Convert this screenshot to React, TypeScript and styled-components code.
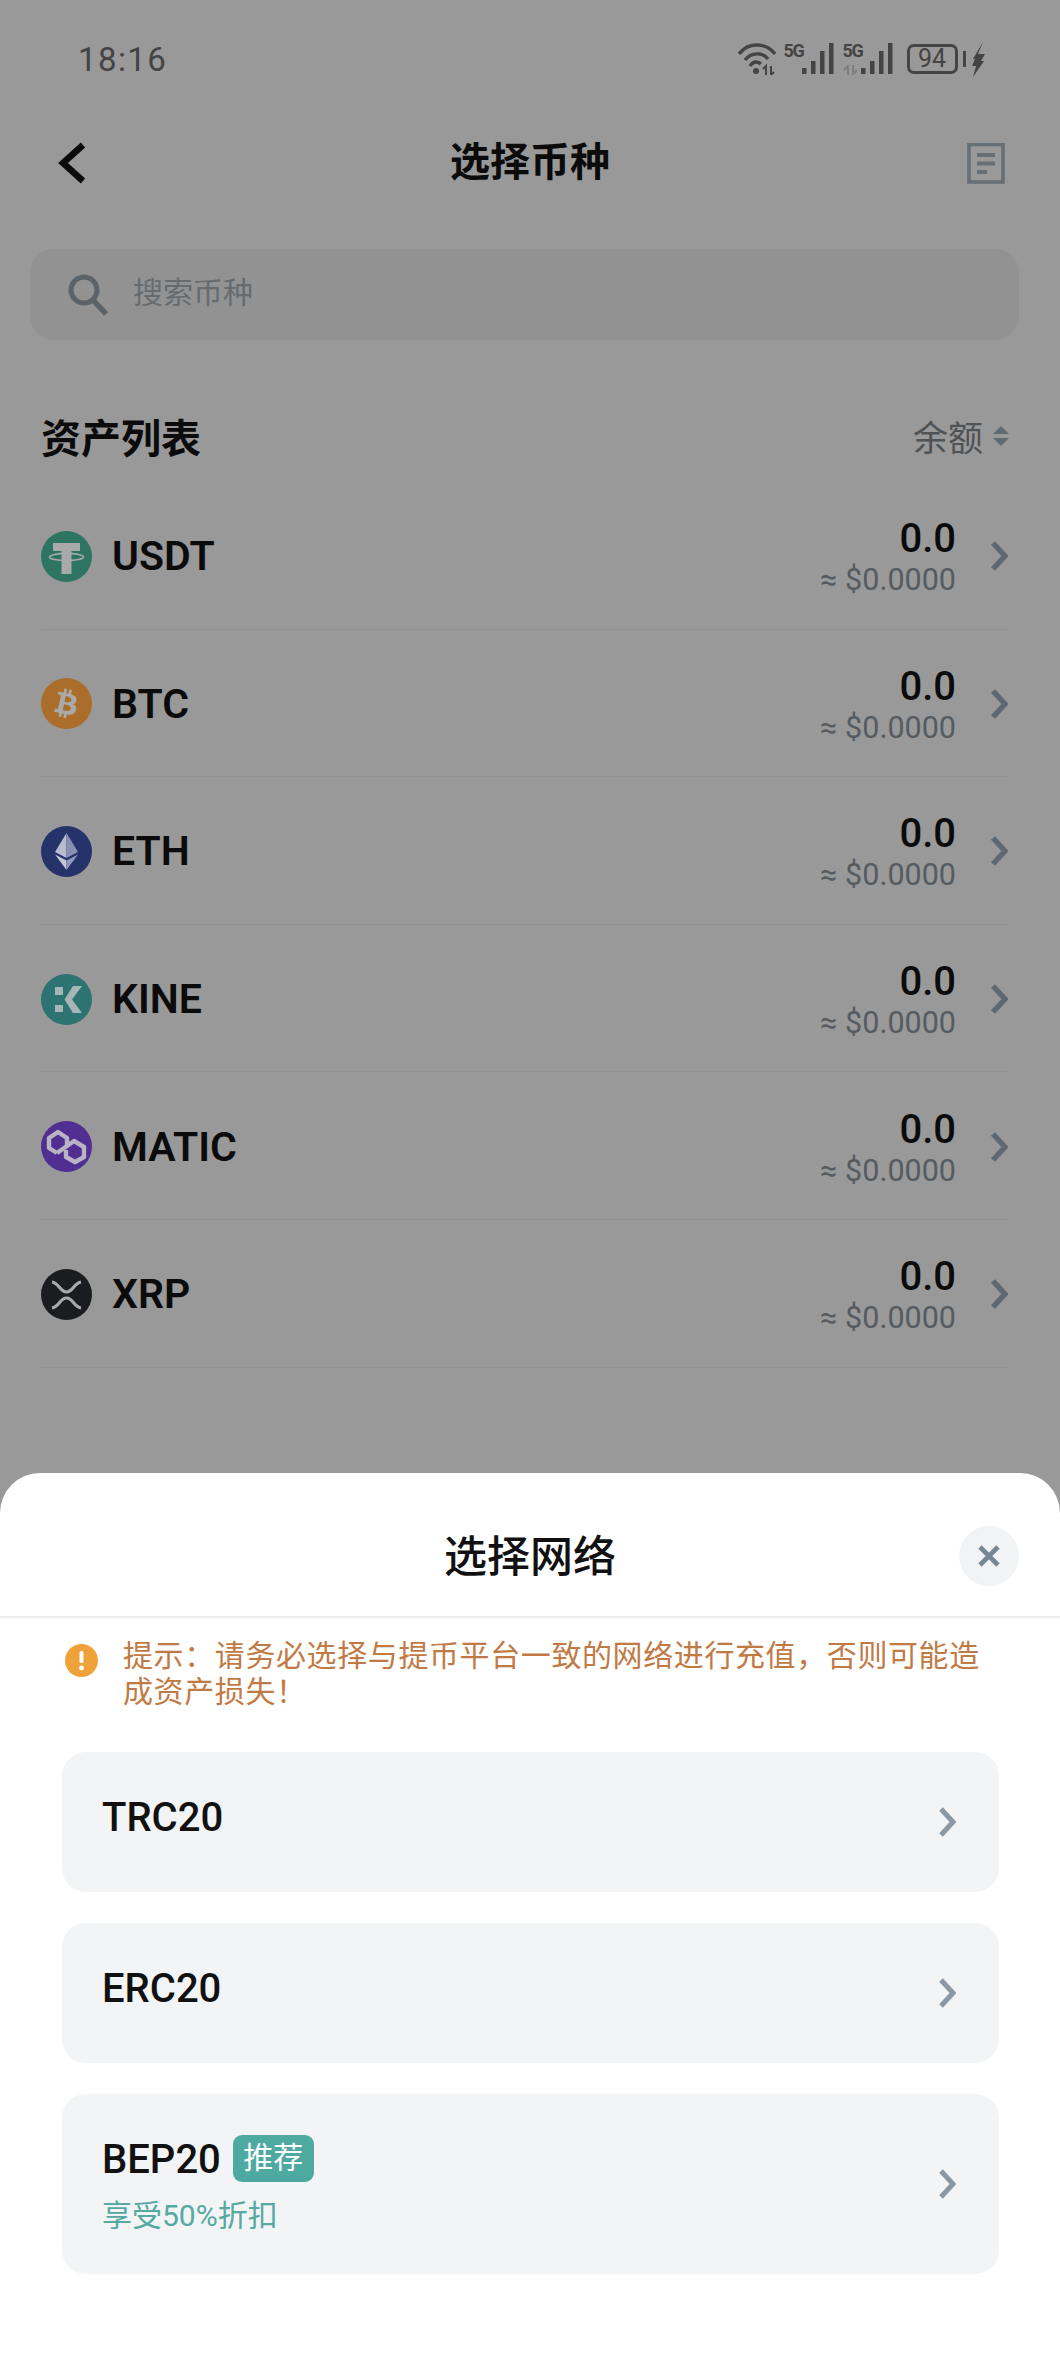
import React from "react";
import styled, { createGlobalStyle } from "styled-components";
import { FaBtc } from "react-icons/fa";

const Global = createGlobalStyle`
  html, body { margin: 0; padding: 0; background: #999; }
  * { box-sizing: border-box; }
  body { font-family: Roboto, "Noto Sans CJK SC", sans-serif; }
`;

const Screen = styled.div`
  position: relative;
  width: 1060px;
  height: 2376px;
  overflow: hidden;
  background: #999999;
  color: #0b0b0b;
`;

const StatusBar = styled.div`
  height: 118px;
  padding: 0 75px 0 78px;
  display: flex;
  align-items: center;
  justify-content: space-between;
`;
const Time = styled.div`
  font-size: 33px;
  letter-spacing: 1.4px;
  color: #444;
`;
const StatusIcons = styled.div`
  display: flex;
  align-items: center;
  color: #404040;
`;
const SignalGroup = styled.div`
  display: flex;
  align-items: flex-end;
  height: 32px;
  margin-left: 8px;
`;
const FiveGStack = styled.div`
  width: 18px;
  height: 32px;
  display: flex;
  flex-direction: column;
  justify-content: space-between;
`;
const FiveG = styled.span`
  font-size: 18px;
  line-height: 15px;
  font-weight: 700;
  letter-spacing: -1.3px;
  color: #444;
`;
const Battery = styled.div`
  width: 51px;
  height: 30px;
  margin-left: 13px;
  border: 3px solid #444;
  border-radius: 7px;
  font-size: 25px;
  line-height: 24px;
  text-align: center;
  color: #444;
`;
const BatteryNib = styled.div`
  width: 3.5px;
  height: 16px;
  margin: 0 6px 0 5px;
  background: #444;
`;

const Header = styled.div`
  height: 90px;
  padding: 0 55px;
  display: grid;
  grid-template-columns: 1fr auto 1fr;
  align-items: center;
`;
const BackBtn = styled.div`
  display: flex;
  margin-left: 3px;
`;
const Title = styled.div`
  font-size: 40px;
  font-weight: 700;
  line-height: 50px;
`;
const HeaderEnd = styled.div`
  display: flex;
  justify-content: flex-end;
`;

const SearchBox = styled.div`
  height: 91px;
  margin: 41px 41px 0 30px;
  padding: 0 0 0 38px;
  display: flex;
  align-items: center;
  gap: 25px;
  background: #929292;
  border-radius: 24px;
`;
const Placeholder = styled.span`
  font-size: 30px;
  line-height: 40px;
  margin-bottom: 3px;
  color: #666b70;
`;

const ListHead = styled.div`
  height: 142px;
  padding: 49px 51px 0 41px;
  display: flex;
  align-items: center;
  justify-content: space-between;
`;
const ListTitle = styled.div`
  font-size: 40px;
  font-weight: 700;
`;
const SortBtn = styled.div`
  display: flex;
  align-items: center;
  gap: 10px;
  font-size: 35px;
  color: #505356;
`;

const List = styled.div`
  margin: 0 52px 0 41px;
`;
const Row = styled.div`
  height: 147.6px;
  padding-top: 2px;
  display: flex;
  align-items: center;
  border-bottom: 1.5px solid #919191;
`;
const Logo = styled.div<{ $bg: string }>`
  width: 51px;
  height: 51px;
  border-radius: 50%;
  flex: none;
  display: flex;
  align-items: center;
  justify-content: center;
  background: ${p => p.$bg};
  color: #a9a9a9;
  svg { display: block; }
`;
const RotatedGlyph = styled.span`
  display: flex;
  transform: rotate(12deg);
`;
const CoinName = styled.div`
  margin-left: 20px;
  font-size: 41px;
  font-weight: 600;
  flex: 1;
`;
const Amounts = styled.div`
  text-align: right;
  margin-right: 34px;
  padding-top: 3px;
`;
const Amount = styled.div`
  font-size: 40px;
  font-weight: 500;
  line-height: 44px;
`;
const Fiat = styled.div`
  font-size: 30.5px;
  line-height: 36px;
  margin-top: 1px;
  color: #565b60;
`;

const Sheet = styled.div`
  position: absolute;
  left: 0;
  right: 0;
  bottom: 0;
  height: 903px;
  background: #ffffff;
  border-radius: 40px 40px 0 0;
`;
const SheetHead = styled.div`
  height: 145px;
  padding: 22px 41px 0;
  display: grid;
  grid-template-columns: 1fr auto 1fr;
  align-items: center;
  border-bottom: 2px solid #efefef;
`;
const SheetTitle = styled.div`
  font-size: 43px;
  line-height: 56px;
  font-weight: 500;
  color: #111;
  padding-top: 3px;
`;
const CloseBtn = styled.div`
  justify-self: end;
  width: 60px;
  height: 60px;
  border-radius: 50%;
  background: #f1f3f5;
  display: flex;
  align-items: center;
  justify-content: center;
`;
const Notice = styled.div`
  padding: 20px 80px 0 65px;
  display: flex;
  gap: 25px;
`;
const NoticeIcon = styled.div`
  flex: none;
  width: 33px;
  height: 33px;
  margin-top: 6px;
  svg { display: block; }
`;
const NoticeText = styled.div`
  font-size: 30px;
  line-height: 36px;
  letter-spacing: 0.6px;
  color: #c27a45;
`;
const Networks = styled.div`
  padding: 42px 61px 0 62px;
  display: flex;
  flex-direction: column;
  gap: 31px;
`;
const Card = styled.div`
  padding: 0 43px 0 40px;
  display: flex;
  align-items: center;
  justify-content: space-between;
  background: #f3f4f6;
  border-radius: 24px;
`;
const CardBody = styled.div<{ $bottom: number }>`
  padding: 40px 0 ${p => p.$bottom}px;
  display: flex;
  flex-direction: column;
`;
const NetRow = styled.div`
  display: flex;
  align-items: center;
  gap: 12px;
  height: 50px;
`;
const NetName = styled.span`
  font-size: 40px;
  font-weight: 500;
  color: #111;
`;
const Badge = styled.span`
  width: 81px;
  height: 47px;
  border-radius: 9px;
  background: #4eaaa0;
  color: #fff;
  font-size: 30px;
  line-height: 45px;
  text-align: center;
  margin-top: -2px;
`;
const Discount = styled.div`
  margin-top: 11px;
  font-size: 30px;
  line-height: 42px;
  color: #55a9a0;
`;

const Chevron = ({ color, w = 18, h = 30, sw = 5 }: { color: string; w?: number; h?: number; sw?: number }) => (
  <svg width={w} height={h} viewBox={`0 0 ${w} ${h}`} fill="none">
    <path d={`M3 2 L${w - 3} ${h / 2} L3 ${h - 2}`} stroke={color} strokeWidth={sw} />
  </svg>
);

const Wifi = () => (
  <svg width="38" height="32" viewBox="0 0 38 32" fill="none" stroke="#444" strokeWidth="3.4">
    <path d="M1 11 C10 -1 28 -1 37 11" />
    <path d="M7 17 C13 9 25 9 30 16" />
    <path d="M12 23 C15 18 20 18 23 21" />
    <circle cx="18" cy="28" r="3" fill="#444" stroke="none" />
    <path d="M28 32 V23 L25 26 M33 23 V32 L36 29" strokeWidth="2" />
  </svg>
);

const Signal = () => (
  <svg width="33" height="32" viewBox="0 0 33 32" fill="#444">
    <rect x="0" y="25" width="4.5" height="6" />
    <rect x="9" y="18" width="4.5" height="13" />
    <rect x="18" y="8" width="4.5" height="23" />
    <rect x="27" y="0" width="4.5" height="31" />
  </svg>
);

const DataArrows = () => (
  <svg width="17" height="10" viewBox="0 0 17 10" fill="none" stroke="#7e7e7e" strokeWidth="2">
    <path d="M5 10 V1 L1 5 M10 0 V9 L14 5" />
  </svg>
);

const Bolt = () => (
  <svg width="13" height="35" viewBox="0 0 13 35" fill="#444">
    <path d="M11 0 L6 12 L13 12 L9 19 L12 19 L1 35 L4 24 L0 24 L3 17 L1 17 Z" />
  </svg>
);

const CoinUsdt = () => (
  <svg width="51" height="51" viewBox="0 0 51 51" fill="none">
    <path d="M12 12 H39 V20 H30.5 V43 H20.5 V20 H12 Z" fill="#a9a9a9" />
    <ellipse cx="25.5" cy="26" rx="17" ry="3.6" stroke="#a9a9a9" strokeWidth="1.6" />
  </svg>
);
const CoinEth = () => (
  <svg width="51" height="51" viewBox="0 0 51 51">
    <path d="M25.5 7 L14 26 L25.5 32 Z" fill="#b8bcd0" />
    <path d="M25.5 7 L37 26 L25.5 32 Z" fill="#8a90b4" />
    <path d="M14 28.5 L25.5 44 V34.5 Z" fill="#c6c8d6" />
    <path d="M37 28.5 L25.5 44 V34.5 Z" fill="#9298ba" />
  </svg>
);
const CoinKine = () => (
  <svg width="51" height="51" viewBox="0 0 51 51" fill="#a6b6b6">
    <rect x="14" y="13" width="8" height="8" />
    <rect x="14" y="31" width="8" height="7" />
    <path d="M32 12 H41 L31 25.5 L41 39 H32 L23.5 25.5 Z" />
  </svg>
);
const CoinMatic = () => (
  <svg width="51" height="51" viewBox="0 0 51 51" fill="none" stroke="#b9b4c4" strokeWidth="4.4" strokeLinejoin="round">
    <path d="M16 32 L8 27 V17 L17 11 L26 17 V24" />
    <path d="M16 32 L33 20 L43 26 V36 L34 41 L25 36 V29" />
  </svg>
);
const CoinXrp = () => (
  <svg width="51" height="51" viewBox="0 0 51 51" fill="none" stroke="#a9a9a9" strokeWidth="3.2">
    <path d="M11 13 C18 14 19 23 25.5 23 C32 23 33 14 40 13" />
    <path d="M11 39 C18 38 19 29 25.5 29 C32 29 33 38 40 39" />
  </svg>
);

const coins = [
  { name: "USDT", bg: "#2d7560", logo: <CoinUsdt /> },
  { name: "BTC", bg: "#aa6d2a", logo: <RotatedGlyph><FaBtc size={29} /></RotatedGlyph> },
  { name: "ETH", bg: "#25336a", logo: <CoinEth /> },
  { name: "KINE", bg: "#2d7371", logo: <CoinKine /> },
  { name: "MATIC", bg: "#512e92", logo: <CoinMatic /> },
  { name: "XRP", bg: "#1b1c20", logo: <CoinXrp /> },
];

export default function App() {
  return (
    <Screen>
      <Global />
      <StatusBar>
        <Time>18:16</Time>
        <StatusIcons>
          <Wifi />
          <SignalGroup>
            <FiveGStack><FiveG>5G</FiveG></FiveGStack>
            <Signal />
          </SignalGroup>
          <SignalGroup>
            <FiveGStack><FiveG>5G</FiveG><DataArrows /></FiveGStack>
            <Signal />
          </SignalGroup>
          <Battery>94</Battery>
          <BatteryNib />
          <Bolt />
        </StatusIcons>
      </StatusBar>

      <Header>
        <BackBtn>
          <svg width="30" height="42" viewBox="0 0 30 42" fill="none">
            <path d="M25 3 L5 21 L25 39" stroke="#0b0b0b" strokeWidth="6.5" />
          </svg>
        </BackBtn>
        <Title>选择币种</Title>
        <HeaderEnd>
          <svg width="38" height="41" viewBox="0 0 38 41" fill="none" stroke="#676f76">
            <rect x="2" y="1.5" width="34" height="37.5" strokeWidth="3.6" />
            <path d="M10 12 H28 M10 20.5 H28 M10 29 H20" strokeWidth="4" />
          </svg>
        </HeaderEnd>
      </Header>

      <SearchBox>
        <svg width="40" height="42" viewBox="0 0 40 42" fill="none" stroke="#5c6368">
          <circle cx="16" cy="16" r="13" strokeWidth="5" />
          <path d="M25 26 L38 40" strokeWidth="5.5" />
        </svg>
        <Placeholder>搜索币种</Placeholder>
      </SearchBox>

      <ListHead>
        <ListTitle>资产列表</ListTitle>
        <SortBtn>
          余额
          <svg width="16" height="20" viewBox="0 0 16 20" fill="#5e6a72">
            <path d="M8 0 L16 8 H0 Z M0 12 H16 L8 20 Z" />
          </svg>
        </SortBtn>
      </ListHead>

      <List>
        {coins.map(c => (
          <Row key={c.name}>
            <Logo $bg={c.bg}>{c.logo}</Logo>
            <CoinName>{c.name}</CoinName>
            <Amounts>
              <Amount>0.0</Amount>
              <Fiat>≈ $0.0000</Fiat>
            </Amounts>
            <Chevron color="#5d6873" sw={5.5} />
          </Row>
        ))}
      </List>

      <Sheet>
        <SheetHead>
          <span />
          <SheetTitle>选择网络</SheetTitle>
          <CloseBtn>
            <svg width="24" height="24" viewBox="0 0 24 24" fill="none">
              <path d="M3 3 L21 21 M21 3 L3 21" stroke="#778693" strokeWidth="4.6" />
            </svg>
          </CloseBtn>
        </SheetHead>
        <Notice>
          <NoticeIcon>
            <svg width="33" height="33" viewBox="0 0 33 33">
              <circle cx="16.5" cy="16.5" r="16.5" fill="#f0a23a" />
              <rect x="14.5" y="7" width="4" height="12" rx="1.5" fill="#fff" />
              <circle cx="16.5" cy="24" r="2.4" fill="#fff" />
            </svg>
          </NoticeIcon>
          <NoticeText>提示：请务必选择与提币平台一致的网络进行充值，否则可能造成资产损失！</NoticeText>
        </Notice>
        <Networks>
          <Card>
            <CardBody $bottom={50}><NetRow><NetName>TRC20</NetName></NetRow></CardBody>
            <Chevron color="#8c98a3" />
          </Card>
          <Card>
            <CardBody $bottom={50}><NetRow><NetName>ERC20</NetName></NetRow></CardBody>
            <Chevron color="#8c98a3" />
          </Card>
          <Card>
            <CardBody $bottom={37}>
              <NetRow><NetName>BEP20</NetName><Badge>推荐</Badge></NetRow>
              <Discount>享受50%折扣</Discount>
            </CardBody>
            <Chevron color="#8c98a3" />
          </Card>
        </Networks>
      </Sheet>
    </Screen>
  );
}
